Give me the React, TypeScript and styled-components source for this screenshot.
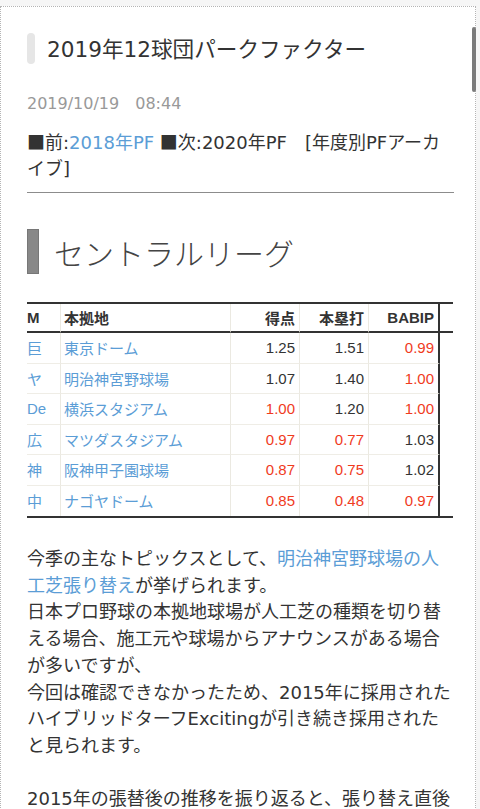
import styled, { createGlobalStyle } from 'styled-components'

const GlobalStyle = createGlobalStyle`
  * { box-sizing: border-box; }
  html, body {
    margin: 0;
    padding: 0;
    background: #f6f6f6;
  }
  body {
    font-family: "DejaVu Sans", "Noto Sans CJK JP", sans-serif;
    color: #333;
  }
`

const Card = styled.article`
  margin-top: 6px;
  width: 476px;
  min-height: 900px;
  background: #fff;
  border: 1px dotted #b5b5b5;
  padding: 26px 21px 40px 26px;
`

const ScrollThumb = styled.div`
  position: fixed;
  top: 27px;
  right: 4px;
  width: 4px;
  height: 65px;
  border-radius: 2px;
  background: #7b7b7b;
`

const TitleRow = styled.header`
  display: flex;
  align-items: center;
  gap: 12px;
  height: 31px;
`

const TitleBar = styled.span`
  width: 8px;
  height: 31px;
  border-radius: 4px;
  background: #e6e6e6;
`

const Title = styled.h1`
  margin: 0;
  font-size: 21.6px;
  font-weight: normal;
  line-height: 31px;
  color: #333;
  position: relative;
  top: 1px;
`

const DateLine = styled.div`
  margin-top: 29px;
  font-size: 16px;
  line-height: 22px;
  color: #999;
`

const Nav = styled.p`
  margin: 13px 0 0;
  font-size: 18px;
  line-height: 26px;
  color: #333;
`

const Sq = styled.span`
  font-family: "Noto Sans CJK JP", sans-serif;
`

const Link = styled.a`
  color: #5b9dd6;
  text-decoration: none;
`

const Rule = styled.hr`
  margin: 10px 0 0;
  border: 0;
  border-top: 1px solid #8c8c8c;
`

const SectionHead = styled.h2`
  margin: 36px 0 0;
  display: flex;
  align-items: center;
  gap: 15px;
  height: 45px;
  font-size: 30px;
  font-weight: 300;
  color: #444;
  font-family: "Noto Sans CJK JP", sans-serif;
`

const SectionBar = styled.span`
  width: 12px;
  height: 45px;
  background: #888;
  border: 1px solid #777;
`

const TableWrap = styled.div`
  margin-top: 28px;
  width: 426px;
  overflow: hidden;
`

const Table = styled.table`
  width: 480px;
  table-layout: fixed;
  border-collapse: separate;
  border-spacing: 0;
  border-top: 2px solid #333;
  border-bottom: 2px solid #333;
  font-family: "Liberation Sans", "Noto Sans CJK JP", sans-serif;
  font-size: 15px;
  color: #333;
`

const Th = styled.th<{ $align?: string; $first?: boolean; $edge?: boolean }>`
  height: 29px;
  padding: 0 ${(p) => (p.$first ? '0' : '4px')} 0 ${(p) => (p.$first ? '0' : '3px')};
  text-align: ${(p) => p.$align || 'left'};
  font-weight: bold;
  border-bottom: 2px solid #333;
  border-left: ${(p) => (p.$first ? 'none' : '1px solid #ebe9e1')};
  border-right: ${(p) => (p.$edge ? '2px solid #333' : 'none')};
  white-space: nowrap;
`

const Td = styled.td<{
  $align?: string
  $first?: boolean
  $edge?: boolean
  $last?: boolean
  $tone?: 'red' | 'blue'
}>`
  height: 30.5px;
  padding: 0 ${(p) => (p.$first ? '0' : '4px')} 0 ${(p) => (p.$first ? '0' : '3px')};
  text-align: ${(p) => p.$align || 'left'};
  color: ${(p) => (p.$tone === 'red' ? '#f03b1d' : p.$tone === 'blue' ? '#5b9dd6' : '#333')};
  border-bottom: ${(p) => (p.$last ? 'none' : '1px solid #efede6')};
  border-left: ${(p) => (p.$first ? 'none' : '1px solid #ebe9e1')};
  border-right: ${(p) => (p.$edge ? '2px solid #333' : 'none')};
  white-space: nowrap;
`

const Body = styled.p`
  margin: 28px 0 0;
  font-size: 18px;
  line-height: 26.7px;
  color: #333;
`

type Row = { team: string; park: string; runs: string; hr: string; babip: string }

const rows: Row[] = [
  { team: '巨', park: '東京ドーム', runs: '1.25', hr: '1.51', babip: '0.99' },
  { team: 'ヤ', park: '明治神宮野球場', runs: '1.07', hr: '1.40', babip: '1.00' },
  { team: 'De', park: '横浜スタジアム', runs: '1.00', hr: '1.20', babip: '1.00' },
  { team: '広', park: 'マツダスタジアム', runs: '0.97', hr: '0.77', babip: '1.03' },
  { team: '神', park: '阪神甲子園球場', runs: '0.87', hr: '0.75', babip: '1.02' },
  { team: '中', park: 'ナゴヤドーム', runs: '0.85', hr: '0.48', babip: '0.97' },
]

// 1.00以下は赤字
const tone = (v: string) => (parseFloat(v) <= 1 ? 'red' : undefined)

export default function App() {
  return (
    <>
      <GlobalStyle />
      <ScrollThumb />
      <Card>
        <TitleRow>
          <TitleBar />
          <Title>2019年12球団パークファクター</Title>
        </TitleRow>
        <DateLine>2019/10/19　08:44</DateLine>
        <Nav>
          <Sq>■</Sq>前:<Link href="#">2018年PF</Link> <Sq>■</Sq>次:2020年PF　[年度別PFアーカイブ]
        </Nav>
        <Rule />

        <SectionHead>
          <SectionBar />
          セントラルリーグ
        </SectionHead>

        <TableWrap>
          <Table>
            <colgroup>
              <col style={{ width: 33 }} />
              <col style={{ width: 170 }} />
              <col style={{ width: 69 }} />
              <col style={{ width: 69 }} />
              <col style={{ width: 72 }} />
              <col style={{ width: 67 }} />
            </colgroup>
            <thead>
              <tr>
                <Th $first>M</Th>
                <Th>本拠地</Th>
                <Th $align="right">得点</Th>
                <Th $align="right">本塁打</Th>
                <Th $align="right" $edge>BABIP</Th>
                <Th style={{ borderLeft: 'none' }} />
              </tr>
            </thead>
            <tbody>
              {rows.map((r, i) => {
                const last = i === rows.length - 1
                return (
                  <tr key={r.team}>
                    <Td $first $last={last} $tone="blue">{r.team}</Td>
                    <Td $last={last} $tone="blue">{r.park}</Td>
                    <Td $align="right" $last={last} $tone={tone(r.runs)}>{r.runs}</Td>
                    <Td $align="right" $last={last} $tone={tone(r.hr)}>{r.hr}</Td>
                    <Td $align="right" $last={last} $edge $tone={tone(r.babip)}>{r.babip}</Td>
                    <Td $last={last} style={{ borderLeft: 'none', borderBottom: 'none' }} />
                  </tr>
                )
              })}
            </tbody>
          </Table>
        </TableWrap>

        <Body>
          今季の主なトピックスとして、<Link href="#">明治神宮野球場の人工芝張り替え</Link>が挙げられます。
          <br />
          日本プロ野球の本拠地球場が人工芝の種類を切り替える場合、施工元や球場からアナウンスがある場合が多いですが、
          <br />
          今回は確認できなかったため、2015年に採用されたハイブリッドターフExcitingが引き続き採用されたと見られます。
          <br />
          <br />
          2015年の張替後の推移を振り返ると、張り替え直後の数値がどう変化したかが見えてきます。
        </Body>
      </Card>
    </>
  )
}
